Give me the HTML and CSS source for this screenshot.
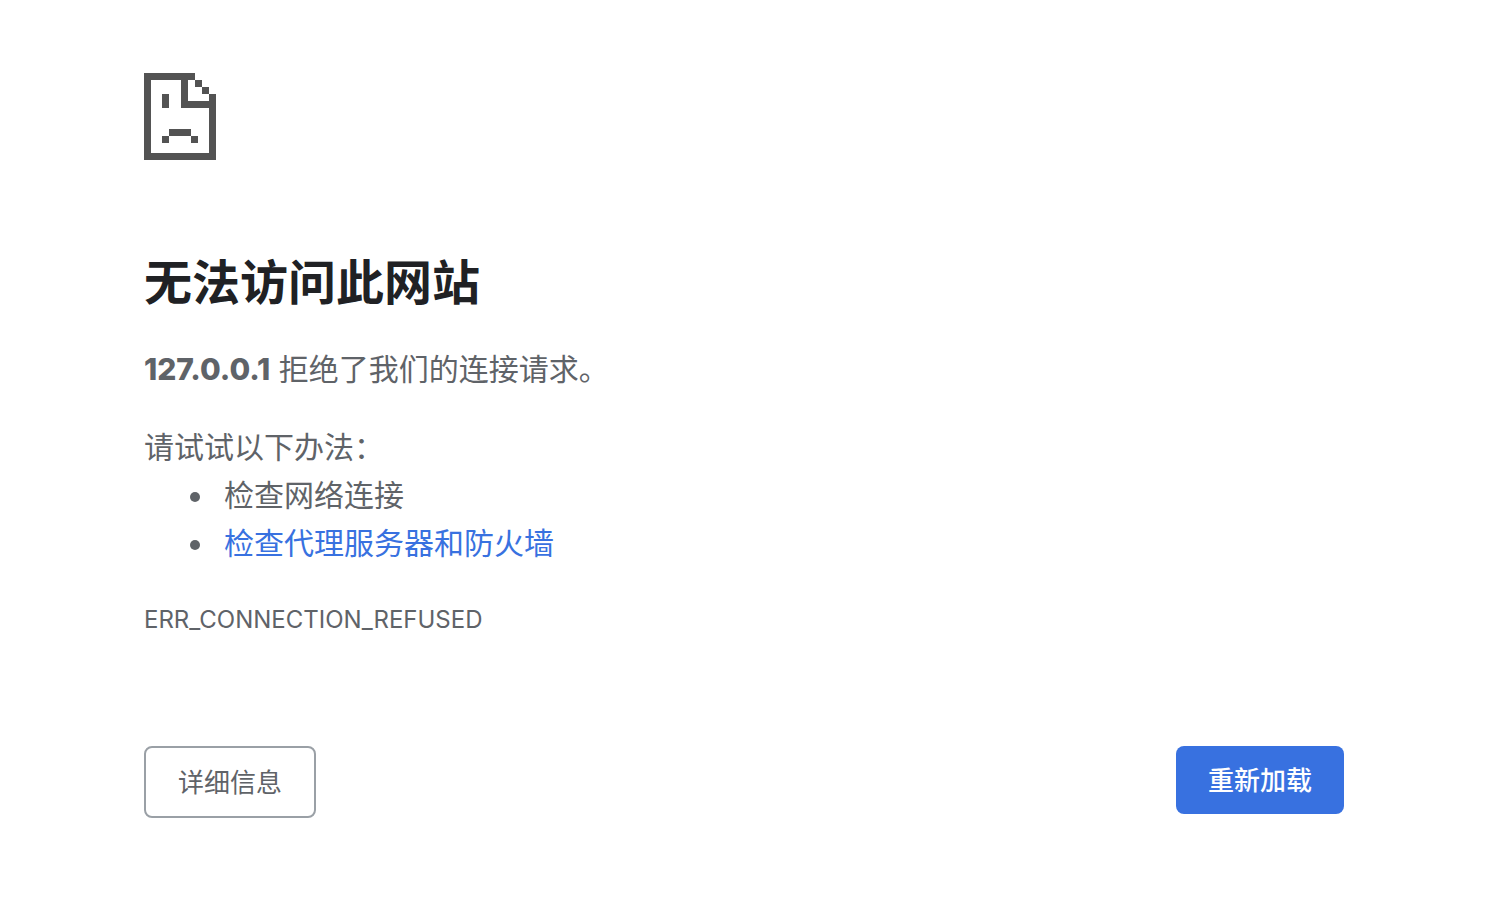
FILE: index.html
```html
<!DOCTYPE html>
<html lang="zh-CN">
<head>
    <meta charset="UTF-8">
    <meta name="viewport" content="width=device-width, initial-scale=1.0">
    <title>127.0.0.1</title>
    <link rel="stylesheet" href="styles.css">
</head>
<body>
    <main class="container">
        <svg class="icon" viewBox="0 0 72 87" shape-rendering="crispEdges" aria-hidden="true">
            <path d="M0 0H51V7H44V28H65V21H72V87H0ZM7 7V80H65V35H37V7Z" fill-rule="evenodd"/>
            <path d="M51 7h7v7h-7zM58 14h7v7h-7z"/>
            <path d="M18 21h7v14h-7z"/>
            <path d="M25 56h22v7h-22zM18 63h7v7h-7zM47 63h7v7h-7z"/>
        </svg>

        <h1>无法访问此网站</h1>
        <p class="summary"><strong>127.0.0.1</strong> 拒绝了我们的连接请求。</p>

        <div class="suggestions">
            <p>请试试以下办法：</p>
            <ul>
                <li>检查网络连接</li>
                <li><a href="#buttons">检查代理服务器和防火墙</a></li>
            </ul>
        </div>

        <div class="error-code">ERR_CONNECTION_REFUSED</div>

        <div class="buttons" id="buttons">
            <button type="button" class="details-btn">详细信息</button>
            <button type="button" class="reload-btn" onclick="location.reload()">重新加载</button>
        </div>
    </main>
</body>
</html>
```

FILE: styles.css
```css
body { margin: 0; background: #fff; color: #5f6368; font-family: Inter, "Noto Sans CJK SC", sans-serif; font-size: 30px; line-height: 48px; }
.container { padding: 73px 148px 40px 144px; }
.icon { display: block; width: 72px; height: 87px; fill: #535353; }
h1 { margin: 93px 0 32px; color: #202124; font-size: 48px; font-weight: 700; line-height: 60px; }
p { margin: 0; }
strong { font-weight: 800; }
.summary { margin-bottom: 30px; }
ul { margin: 0; padding-left: 72px; }
li { padding-left: 8px; }
a { color: #3871e0; text-decoration: none; }
.error-code { margin-top: 29px; font-size: 24px; }
.buttons { display: flex; justify-content: space-between; align-items: flex-start; margin-top: 102px; }
button { padding: 17px 32px 15px; border: none; border-radius: 8px; font-family: inherit; font-size: 26px; line-height: 36px; cursor: pointer; }
.details-btn { border: 2px solid #9aa0a6; background: #fff; color: #5f6368; }
.reload-btn { background: #3871e0; color: #fff; font-weight: 500; }
```
